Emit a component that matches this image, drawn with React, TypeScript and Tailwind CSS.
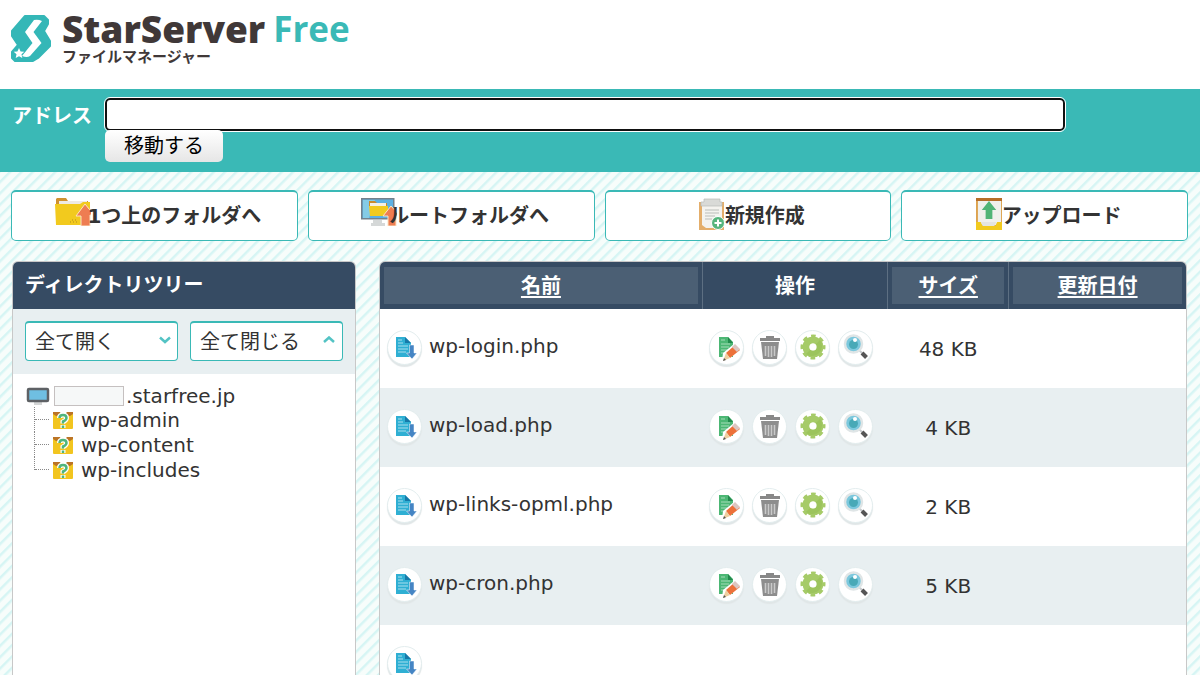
import React from 'react';

interface FileRow {
  name: string;
  size: string;
}

const files: FileRow[] = [
  { name: 'wp-login.php', size: '48 KB' },
  { name: 'wp-load.php', size: '4 KB' },
  { name: 'wp-links-opml.php', size: '2 KB' },
  { name: 'wp-cron.php', size: '5 KB' },
  { name: '', size: '' },
];

const folders = ['wp-admin', 'wp-content', 'wp-includes'];

/* ---------- ICONS ---------- */

function LogoMark() {
  return (
    <svg className="w-10 h-12 shrink-0" viewBox="0 0 40 48">
      <path d="M14 2H33L37 6V10L33 17L39 27V32L27 44L22 47H4L1 44V38L7 31L1 22V17Z" fill="#34b7b7" stroke="#34b7b7" strokeWidth="2" strokeLinejoin="round" />
      <path d="M23 6Q27 5 31 7L22.500 18L30.500 29L19 42Q16 44 11 42L21.500 29L14 18Z" fill="#fff" />
      <path d="M8 34l1.600 3.400 3.700.4-2.800 2.500.8 3.700L8 42.200 4.700 44l.8-3.700L2.700 37.800l3.700-.4Z" fill="#fff" />
    </svg>
  );
}

function FolderUpIcon() {
  return (
    <svg className="w-9 h-7 -mr-1 shrink-0" viewBox="0 0 36 28">
      <path d="M2 0H11L13 3H33V10H1V1Z" fill="#cf9130" />
      <path d="M4 3H32V9H4Z" fill="#eeeae4" />
      <path d="M0 6H25L28 4H35V27H1Z" fill="#f2ca1e" />
      <path d="M15 24h1m2 0h1m2 0h1m-5-2h1m2 0h1" stroke="#b58d1c" />
      <path d="M30 6L39 17H35V28H26V18H21Z" fill="#ee7d52" stroke="#fbe3c0" strokeWidth="1" />
    </svg>
  );
}

function RootIcon() {
  return (
    <svg className="w-9 h-7 -mr-2 shrink-0" viewBox="0 0 36 28">
      <path d="M12 22H21V25H24V28H10V25H12Z" fill="#d5d8d8" />
      <rect x="0.750" y="0.750" width="32" height="20" fill="#5cb0e4" stroke="#74818c" strokeWidth="1.500" />
      <path d="M2 2H14L8 20H2Z" fill="#84cbe6" />
      <path d="M8 3H14L16 5H26V8H8Z" fill="#c98a2d" />
      <path d="M9 5H25V8H9Z" fill="#f5efe4" />
      <path d="M8 8H27V18H9Z" fill="#f2ca1e" />
      <path d="M30 8L39 18H35V28H27V18H22Z" fill="#ee7d52" stroke="#fbe3c0" strokeWidth="1" />
    </svg>
  );
}

function NewIcon() {
  return (
    <svg className="w-[26px] h-8 shrink-0" viewBox="1 0 26 32">
      <rect x="1" y="4" width="25" height="28" fill="#e4ae6b" />
      <path d="M4 5H24V30H8L4 27Z" fill="#f4f3ef" />
      <path d="M6 1H22V4H24V8H3V4H6Z" fill="#d9dad7" stroke="#b8bab8" strokeWidth="0.700" />
      <path d="M7 12H21M7 15H21M7 18H17M7 21H14" stroke="#b9bdb9" strokeWidth="1.200" />
      <circle cx="20" cy="25" r="6.500" fill="#55b57c" stroke="#fff" />
      <path d="M20 21.500V28.500M16.500 25H23.500" stroke="#fff" strokeWidth="2" />
    </svg>
  );
}

function UploadIcon() {
  return (
    <svg className="w-[26px] h-8 shrink-0" viewBox="1 0 27 32" preserveAspectRatio="none">
      <rect x="1" y="0" width="27" height="32" fill="#dda34f" />
      <path d="M1 0H28V3H1Z" fill="#b66d28" />
      <path d="M3 3H27V27H3Z" fill="#f0f0ec" />
      <path d="M1 24H6L8 28H21L23 24H28V32H1Z" fill="#f2ca1e" />
      <path d="M6 24H22L20 28H8Z" fill="#e4e4e0" />
      <path d="M14.500 3L22 12H18V21H11V12H7Z" fill="#51b476" />
    </svg>
  );
}

function MonitorIcon() {
  return (
    <svg className="w-6 h-5 shrink-0" viewBox="0 0 24 20">
      <path d="M8 16H16V19H8Z" fill="#d4d6d6" />
      <rect x="2" y="3" width="20" height="12" rx="1" fill="#6fbfe2" stroke="#5e6165" strokeWidth="2.500" />
    </svg>
  );
}

function UnknownFolderIcon() {
  return (
    <svg className="w-5 h-5 shrink-0" viewBox="0 0 20 20">
      <path d="M0 2H7L8 4H12L14 2H20V7H0Z" fill="#bb7426" />
      <path d="M0 4L3 6H17L20 4V18Q20 19 19 19H1Q0 19 0 18Z" fill="#f2c51f" />
      <path d="M6.500 8Q6.500 5 10 5Q13.500 5 13.500 8Q13.500 10 10 12V13.500M10 15V18" fill="none" stroke="#fff" strokeWidth="5" />
      <path d="M6.500 8Q6.500 5 10 5Q13.500 5 13.500 8Q13.500 10 10 11.500V13.500M10 15.500V18" fill="none" stroke="#4fb57c" strokeWidth="2.500" />
    </svg>
  );
}

function DownloadGlyph() {
  return (
    <svg className="w-6 h-6" viewBox="0 0 24 24">
      <path d="M3 2H12L18 8V22H3Z" fill="#2fafd3" />
      <path d="M12 2L18 8H12Z" fill="#1779a8" />
      <path d="M5 5H9M5 8H10M5 11H15M5 14H15M5 17H13" stroke="#a9dfee" />
      <path d="M16.500 10H21V18H24L19 24L13.500 18H16.500Z" fill="#4585c4" stroke="#fff" strokeWidth="0.500" />
    </svg>
  );
}

function EditGlyph() {
  return (
    <svg className="w-6 h-6 overflow-visible" viewBox="0 0 24 24">
      <path d="M4 2H13L18 7V22H4Z" fill="#4cb774" />
      <path d="M13 2L18 8H13Z" fill="#238a4d" />
      <path d="M6 5H10M6 9H15M6 12H14M6 15H12M6 18H10" stroke="#a5dcb8" />
      <path d="M8 18L19 9L25 14L14 24L7 26Z" fill="#fff" />
      <path d="M11 18L20 10L25 15L15 23Z" fill="#ec713a" />
      <path d="M17 12L20 9L25 14L22 17Z" fill="#dcc6c1" />
      <path d="M11 18L15 23L8 26Z" fill="#efcfa0" />
      <path d="M9 23L11 25L8 26Z" fill="#555" />
    </svg>
  );
}

function TrashGlyph() {
  return (
    <svg className="w-6 h-6" viewBox="0 0 24 24">
      <path d="M8 1H16V3H22V6H2V3H8Z" fill="#888" />
      <path d="M3 7H21L19 24H5Z" fill="#8d8d8d" />
      <path d="M7.500 11V21M10.500 11V22M13.500 11V22M16.500 11V21" stroke="#c9c9c9" strokeWidth="1.600" />
    </svg>
  );
}

function GearGlyph() {
  return (
    <svg className="w-6 h-6 overflow-visible" viewBox="0 0 24 24">
      <circle cx="12" cy="12" r="7" fill="none" stroke="#a6cb68" strokeWidth="7" />
      <circle cx="12" cy="12" r="11" fill="none" stroke="#a6cb68" strokeWidth="3" strokeDasharray="4.640 4" strokeDashoffset="2.300" />
      <path d="M5 19L19 5A10 10 0 0 1 5 19Z" fill="#92bd50" opacity="0.500" />
      <circle cx="12" cy="12" r="3.500" fill="#fff" />
    </svg>
  );
}

function SearchGlyph() {
  return (
    <svg className="w-6 h-6 overflow-visible" viewBox="0 0 24 24">
      <path d="M15 15L19 19" stroke="#c5c9cc" strokeWidth="2" />
      <path d="M18 18L22.500 22.500" stroke="#555" strokeWidth="4" />
      <circle cx="9.500" cy="9" r="8.500" fill="#7cc8dd" stroke="#dfe5e6" strokeWidth="2.500" />
      <circle cx="9.500" cy="9.500" r="4.500" fill="#48a9b7" />
      <circle cx="11" cy="5" r="2" fill="#fff" />
    </svg>
  );
}

/* ---------- PARTS ---------- */

function RoundButton({ label, children }: { label: string; children: React.ReactNode }) {
  return (
    <button type="button" aria-label={label} className="size-[35px] shrink-0 flex items-center justify-center rounded-full bg-white border border-[#e3edee] shadow-[0_2px_1px_#e0e6e7]">
      {children}
    </button>
  );
}

function ToolButton({ icon, label }: { icon: React.ReactNode; label: string }) {
  return (
    <button type="button" className="h-[51px] flex justify-center rounded-[5px] border border-t-2 border-[#3ab9b6] bg-white pl-2 pt-1.5 font-bold leading-9">
      {icon}
      <span className="relative whitespace-nowrap">{label}</span>
    </button>
  );
}

function SortHeader({ label }: { label: string }) {
  return (
    <a href="#" className="flex h-[37px] items-center justify-center bg-[#4b5f74] underline underline-offset-3 decoration-2">
      {label}
    </a>
  );
}

export default function App() {
  return (
    <div className="h-screen flex flex-col overflow-hidden bg-[#f7fdfb] bg-[repeating-linear-gradient(135deg,#d6f5f4_0px,#d6f5f4_1px,#f7fdfb_3px,#f7fdfb_7px,#d6f5f4_8px)] text-xl text-[#333] font-['DejaVu_Sans','Noto_Sans_CJK_JP',sans-serif]">
      {/* LOGO */}
      <header className="h-[89px] shrink-0 flex gap-[11px] bg-white pl-[11px] pt-[14px]">
        <LogoMark />
        <div className="font-['Open_Sans','Noto_Sans_CJK_JP',sans-serif] font-bold text-[#403838]">
          <div className="flex gap-2 text-[37px] leading-[30px]">
            <span className="font-extrabold">StarServer</span>
            <span className="text-[35px] text-[#3ab9b6]">Free</span>
          </div>
          <div className="text-[15px] leading-6">ファイルマネージャー</div>
        </div>
      </header>

      {/* ADDRESS BAR */}
      <form className="h-[83px] shrink-0 flex items-start bg-[#3ab9b6] pt-[9px]">
        <label htmlFor="address" className="w-[105px] shrink-0 pl-3 font-bold leading-9 text-white">アドレス</label>
        <div className="w-4/5">
          <input id="address" type="text" className="block h-[33px] w-full rounded-[5px] border-2 border-[#111] bg-white px-2 outline-1 outline-white" />
          <button type="button" className="relative block h-8 w-[118px] -mt-px rounded-[5px] bg-linear-to-b from-white to-[#e6e6e6] text-black leading-8">移動する</button>
        </div>
      </form>

      {/* TOOLBAR */}
      <nav className="shrink-0 grid grid-cols-4 gap-2.5 pl-[11px] pr-3 pt-[18px]">
        <ToolButton icon={<FolderUpIcon />} label="1つ上のフォルダへ" />
        <ToolButton icon={<RootIcon />} label="ルートフォルダへ" />
        <ToolButton icon={<NewIcon />} label="新規作成" />
        <ToolButton icon={<UploadIcon />} label="アップロード" />
      </nav>

      <main className="flex min-h-0 flex-1 gap-[23px] pl-3 pr-[13px] pt-5">
        {/* DIRECTORY TREE */}
        <section className="w-[344px] shrink-0 overflow-hidden rounded-t-md border border-b-0 border-[#c8c8c8] bg-white">
          <h2 className="h-[47px] bg-[#364b63] pl-3 font-bold leading-[46px] text-white">ディレクトリツリー</h2>
          <div className="grid grid-cols-2 gap-3 bg-[#e8eff1] p-3 pb-[13px]">
            <button type="button" className="flex h-10 items-center justify-between rounded border border-t-2 border-[#3ab9b6] bg-white pl-[9px] pr-1.5 leading-9">
              全て開く
              <svg className="w-3 h-2 mb-1" viewBox="0 0 12 8"><path d="M1 1.500L6 6L11 1.500" fill="none" stroke="#53c3c4" strokeWidth="2.500" /></svg>
            </button>
            <button type="button" className="flex h-10 items-center justify-between rounded border border-t-2 border-[#3ab9b6] bg-white pl-[9px] pr-[7px] leading-9">
              全て閉じる
              <svg className="w-3 h-2 mb-1" viewBox="0 0 12 8"><path d="M1 6L6 1.500L11 6" fill="none" stroke="#53c3c4" strokeWidth="2.500" /></svg>
            </button>
          </div>
          <div className="pl-[13px] pt-2.5">
            <div className="flex h-6 items-center">
              <MonitorIcon />
              <span className="ml-1 mr-0.5 h-5 w-[70px] border border-[#c5c0c0] bg-[#f6f8f8]" />
              <span>.starfree.jp</span>
            </div>
            <ul className="-mt-px">
              {folders.map((folder, idx) => (
                <li key={folder} className="flex h-[25px] pl-2">
                  <span className={`w-px border-l border-dotted border-[#888] ${idx === folders.length - 1 ? 'h-[13px]' : 'h-full'}`} />
                  <span className="mt-3 mr-1 h-px w-[14px] border-t border-dotted border-[#888]" />
                  <a href="#" className="flex items-center gap-2 leading-6">
                    <UnknownFolderIcon />
                    {folder}
                  </a>
                </li>
              ))}
            </ul>
          </div>
        </section>

        {/* FILE LIST */}
        <section className="min-w-0 flex-1 overflow-hidden rounded-t-md border border-b-0 border-[#c8c8c8] bg-white">
          <table className="w-full table-fixed border-collapse">
            <thead className="bg-[#364b63] text-white">
              <tr className="h-[47px]">
                <th className="w-[40%] p-1 py-[5px]"><SortHeader label="名前" /></th>
                <th className="w-[23%] border-x border-[#5d6f82]">操作</th>
                <th className="w-[15%] p-1 py-[5px]"><SortHeader label="サイズ" /></th>
                <th className="border-l border-[#5d6f82] p-1 py-[5px]"><SortHeader label="更新日付" /></th>
              </tr>
            </thead>
            <tbody>
              {files.map((file, idx) => (
                <tr key={idx} className="h-[79px] even:bg-[#e8eff1]">
                  <td className="pl-[7px] pb-[3px]">
                    <div className="flex items-center gap-[7px]">
                      <RoundButton label="ダウンロード"><DownloadGlyph /></RoundButton>
                      <a href="#" className="pb-0.5">{file.name}</a>
                    </div>
                  </td>
                  <td className="pl-[7px] pb-[3px]">
                    {file.name && (
                      <div className="flex gap-2">
                        <RoundButton label="編集"><EditGlyph /></RoundButton>
                        <RoundButton label="削除"><TrashGlyph /></RoundButton>
                        <RoundButton label="設定"><GearGlyph /></RoundButton>
                        <RoundButton label="表示"><SearchGlyph /></RoundButton>
                      </div>
                    )}
                  </td>
                  <td className="text-center">{file.size}</td>
                  <td />
                </tr>
              ))}
            </tbody>
          </table>
        </section>
      </main>
    </div>
  );
}
